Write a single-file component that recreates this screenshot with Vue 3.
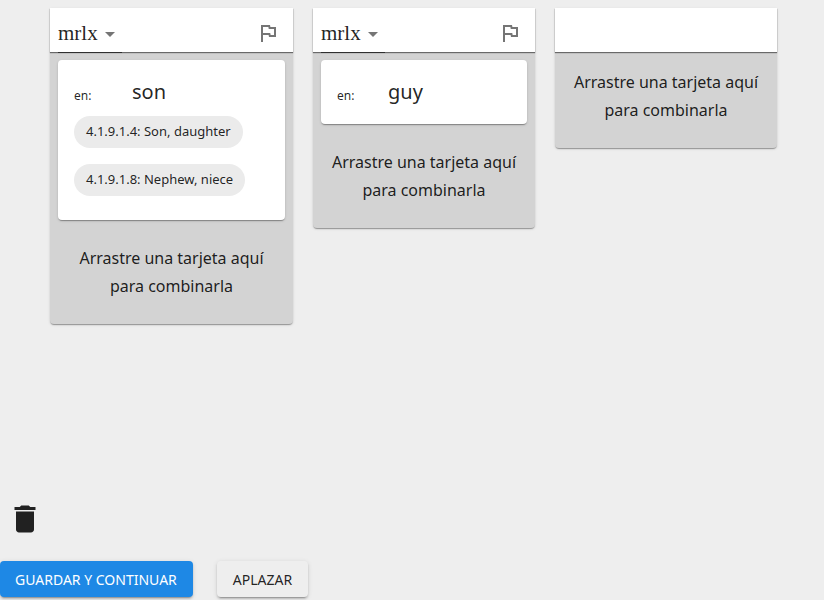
<script setup>
const columns = [
  {
    id: 1,
    wide: true,
    vernacular: 'mrlx',
    cards: [
      {
        gloss: 'son',
        senses: ['4.1.9.1.4: Son, daughter', '4.1.9.1.8: Nephew, niece'],
      },
    ],
  },
  {
    id: 2,
    vernacular: 'mrlx',
    cards: [{ gloss: 'guy', senses: [] }],
  },
  { id: 3, cards: [] },
]
</script>

<template>
  <div class="page">
    <div class="board">
      <section
        v-for="col in columns"
        :key="col.id"
        class="column"
        :class="{ wide: col.wide }"
      >
        <header class="col-header">
          <template v-if="col.vernacular">
            <div class="select">
              <span class="select-value">{{ col.vernacular }}</span>
              <span class="select-arrow"></span>
            </div>
            <svg class="flag" viewBox="0 0 24 24" width="24" height="24">
              <path d="M12.36 6l.4 2H18v6h-3.36l-.4-2H7V6h5.36M14 4H5v17h2v-7h5.6l.4 2h7V6h-5.6L14 4z" />
            </svg>
          </template>
        </header>

        <div v-for="card in col.cards" :key="card.gloss" class="card">
          <div class="gloss-row">
            <span class="lang">en:</span>
            <span class="gloss">{{ card.gloss }}</span>
          </div>
          <div v-if="card.senses.length" class="chips">
            <span v-for="s in card.senses" :key="s" class="chip">{{ s }}</span>
          </div>
        </div>

        <p class="drop-hint">Arrastre una tarjeta aquí para combinarla</p>
      </section>
    </div>

    <div class="trash">
      <svg viewBox="0 0 24 24" width="36" height="36">
        <path d="M6 19c0 1.1.9 2 2 2h8c1.1 0 2-.9 2-2V7H6v12zM19 4h-3.5l-1-1h-5l-1 1H5v2h14V4z" />
      </svg>
    </div>

    <div class="actions">
      <button type="button" class="btn primary">GUARDAR Y CONTINUAR</button>
      <button type="button" class="btn">APLAZAR</button>
    </div>
  </div>
</template>

<style>
body {
  background: #eeeeee;
}
</style>

<style scoped>
.page {
  height: 600px;
  display: flex;
  flex-direction: column;
  font-family: "Noto Sans", "Open Sans", sans-serif;
  color: rgba(0, 0, 0, 0.87);
  overflow: hidden;
}

.board {
  flex: 1;
  display: flex;
  align-items: flex-start;
  gap: 20px;
  padding: 8px 0 0 50px;
}

.column {
  width: 222px;
  background: #d3d3d3;
  border-radius: 0 0 4px 4px;
  box-shadow: 0 2px 1px -1px rgba(0, 0, 0, 0.2), 0 1px 1px 0 rgba(0, 0, 0, 0.14), 0 1px 3px 0 rgba(0, 0, 0, 0.12);
}

.column.wide {
  width: 243px;
}

.col-header {
  height: 44px;
  box-sizing: border-box;
  padding: 0 13px 0 8px;
  display: flex;
  align-items: stretch;
  justify-content: space-between;
  background: #fff;
  box-shadow: 0 1px 1px rgba(0, 0, 0, 0.5);
  position: relative;
}

.select {
  width: 64px;
  box-sizing: border-box;
  border-bottom: 1px solid rgba(0, 0, 0, 0.55);
  margin-bottom: -1px;
  display: flex;
  align-items: center;
  gap: 7px;
  padding-top: 7px;
}

.select-value {
  font-family: "Liberation Serif", serif;
  font-size: 21px;
  line-height: 1;
}

.select-arrow {
  width: 0;
  height: 0;
  margin-top: 2px;
  border-left: 5px solid transparent;
  border-right: 5px solid transparent;
  border-top: 5px solid #757575;
}

.flag {
  align-self: center;
  margin-top: 6px;
  fill: #757575;
}

.card {
  margin: 8px;
  padding: 16px;
  background: #fff;
  border-radius: 4px;
  box-shadow: 0 2px 1px -1px rgba(0, 0, 0, 0.2), 0 1px 1px 0 rgba(0, 0, 0, 0.14), 0 1px 3px 0 rgba(0, 0, 0, 0.12);
}

.gloss-row {
  display: flex;
  align-items: flex-start;
  height: 32px;
}

.lang {
  width: 51px;
  padding-top: 12px;
  font-size: 12px;
  line-height: 16px;
}

.wide .lang {
  width: 58px;
}

.gloss {
  padding-top: 2px;
  font-size: 20px;
}

.chips {
  display: flex;
  flex-direction: column;
  align-items: flex-start;
  gap: 16px;
  margin: 8px 0;
}

.chip {
  height: 32px;
  box-sizing: border-box;
  display: flex;
  align-items: center;
  padding: 0 12px 2px;
  border-radius: 16px;
  background: #ebebeb;
  font-size: 13px;
}

.drop-hint {
  margin: 0;
  padding: 16px 16px 24px;
  font-size: 16px;
  line-height: 28px;
  text-align: center;
}

.trash {
  height: 36px;
  padding-left: 6.5px;
  margin-bottom: 24.5px;
}

.trash svg {
  display: block;
  fill: #212121;
}

.actions {
  display: flex;
  gap: 24px;
  padding-bottom: 3px;
}

.btn {
  height: 36px;
  padding: 0 16px;
  border: none;
  border-radius: 4px;
  background: #eeeeee;
  color: rgba(0, 0, 0, 0.87);
  font-family: inherit;
  font-size: 14px;
  box-shadow: 0 3px 1px -2px rgba(0, 0, 0, 0.2), 0 2px 2px 0 rgba(0, 0, 0, 0.14), 0 1px 5px 0 rgba(0, 0, 0, 0.12);
}

.btn.primary {
  padding: 0 16px 0 15px;
  background: #1e88e5;
  color: #fff;
}
</style>
